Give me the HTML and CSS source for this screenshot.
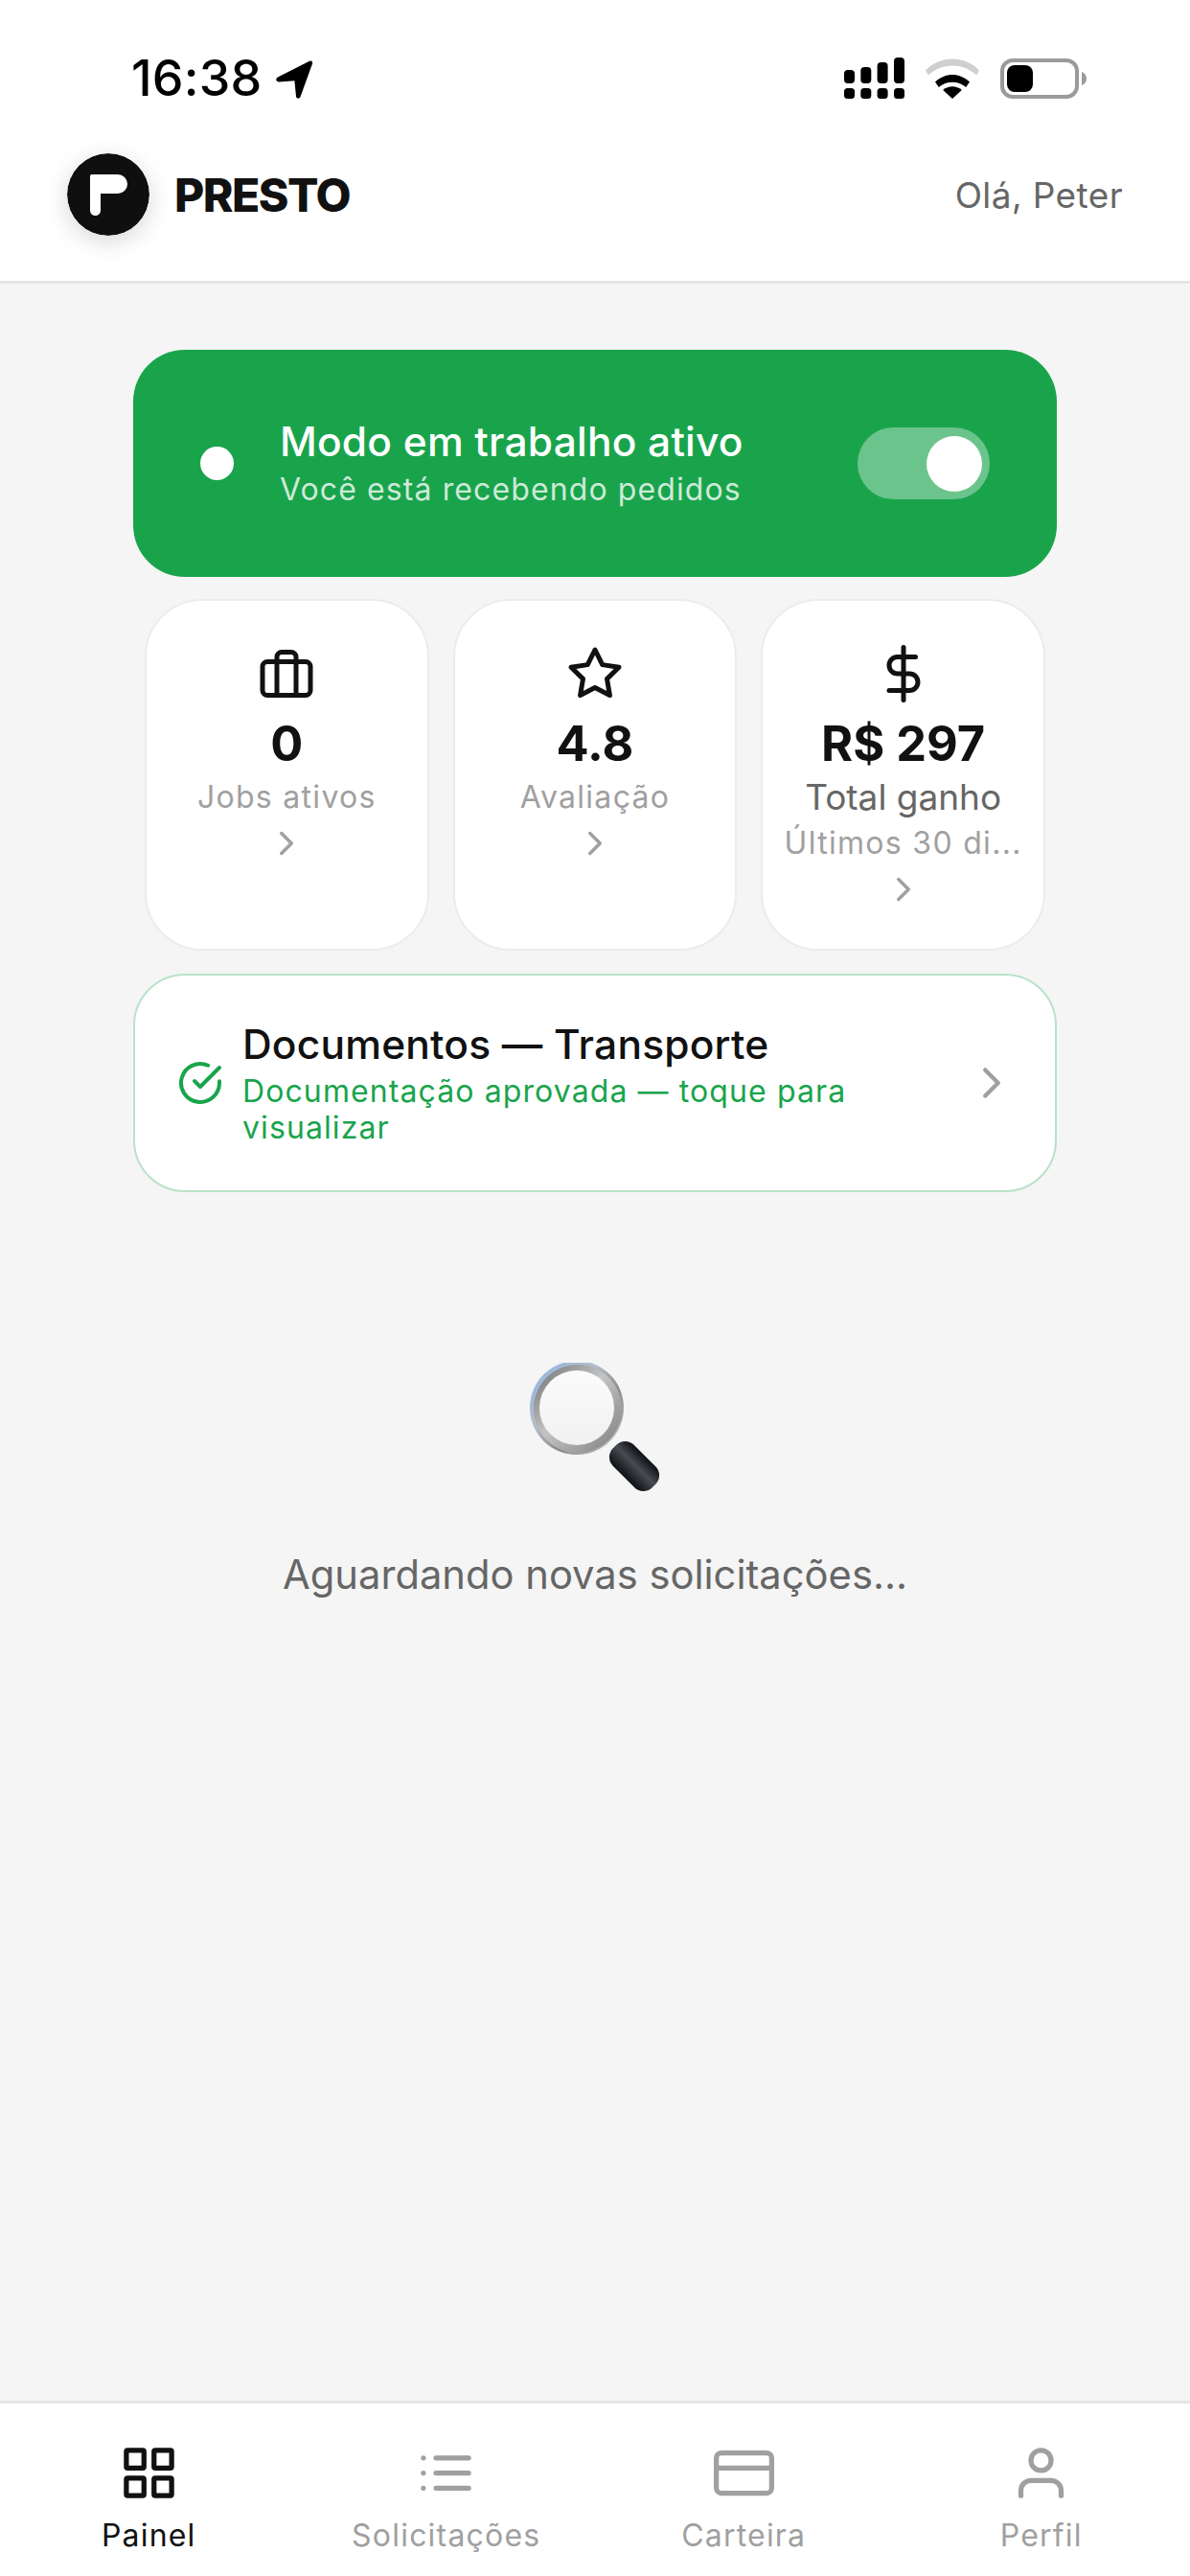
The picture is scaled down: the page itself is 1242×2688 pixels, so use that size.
FILE: index.html
```html
<!DOCTYPE html>
<html lang="pt-BR">
<head>
<meta charset="utf-8">
<title>Presto</title>
<link rel="stylesheet" href="styles.css">
</head>
<body>
<div class="app">
  <header class="top">
    <div class="status">
      <div class="status-left">
        <span class="time">16:38</span>
        <svg class="loc" viewBox="0 0 40 40"><path d="M3 17.500 36 .8c2-.9 3.700.7 3 2.800L26.500 38c-.9 2.400-4.200 2.200-4.500-.4l-1.600-16.300L4.300 22.500c-3.300-.3-4-3.600-1.300-5Z"/></svg>
      </div>
      <div class="status-right">
        <svg class="signal" viewBox="0 0 63 43"><rect x="0" y="13" width="11" height="14" rx="4"/><rect x="17.300" y="10" width="11" height="17" rx="4"/><rect x="34.600" y="5" width="11" height="22" rx="4"/><rect x="52" y="0" width="11" height="27" rx="4"/><rect x="0" y="32" width="11" height="11" rx="3.500"/><rect x="17.300" y="32" width="11" height="11" rx="3.500"/><rect x="34.600" y="32" width="11" height="11" rx="3.500"/><rect x="52" y="32" width="11" height="11" rx="3.500"/></svg>
        <svg class="wifi" viewBox="0 0 56 42"><path class="wifi-off" d="M0 12.500C15-3.500 41-3.500 56 12.500l-3 5C39.500 4 16.500 4 3 17.500Z"/><path d="M10 24.500c10.500-10 25.500-10 36 0l-3.800 5.500c-8-7-20.400-7-28.400 0Z"/><path d="M28 42 18.200 33c5.500-5 14-5 19.600 0Z"/></svg>
        <svg class="battery" viewBox="0 0 90 42"><rect class="bat-body" x="2" y="2" width="78" height="38" rx="11"/><rect x="7" y="7" width="27" height="28" rx="8"/><path class="bat-cap" d="M85 14c3 1 5 4 5 7s-2 6-5 7Z"/></svg>
      </div>
    </div>
    <div class="brandbar">
      <div class="brand">
        <svg class="logo" viewBox="0 0 86 86"><circle cx="43" cy="43" r="43" fill="#0f0f0f"/><path fill="#fff" d="M24 24a2 2 0 0 1 2-2h27a10 10 0 0 1 0 20H35v17.500a5.500 5.500 0 0 1-11 0Z"/></svg>
        <span class="brand-name">PRESTO</span>
      </div>
      <span class="greeting">Olá, Peter</span>
    </div>
  </header>

  <main class="content">
    <section class="work-card">
      <span class="work-dot"></span>
      <div class="work-text">
        <div class="work-title">Modo em trabalho ativo</div>
        <div class="work-sub">Você está recebendo pedidos</div>
      </div>
      <div class="toggle"><span class="knob"></span></div>
    </section>

    <section class="stats">
      <article class="stat">
        <svg class="stat-icon" viewBox="0 0 24 24"><rect x="2" y="7" width="20" height="14" rx="2"/><path d="M16 21V5a2 2 0 0 0-2-2h-4a2 2 0 0 0-2 2v16"/></svg>
        <div class="stat-value">0</div>
        <div class="stat-label">Jobs ativos</div>
        <svg class="chev" viewBox="0 0 24 24"><path d="m9 18 6-6-6-6"/></svg>
      </article>
      <article class="stat">
        <svg class="stat-icon" viewBox="0 0 24 24"><path d="m12 2 3.090 6.260L22 9.270l-5 4.870 1.180 6.880L12 17.770l-6.180 3.250L7 14.140 2 9.270l6.910-1.010L12 2Z"/></svg>
        <div class="stat-value">4.8</div>
        <div class="stat-label">Avaliação</div>
        <svg class="chev" viewBox="0 0 24 24"><path d="m9 18 6-6-6-6"/></svg>
      </article>
      <article class="stat">
        <svg class="stat-icon" viewBox="0 0 24 24"><path d="M12 1v22"/><path d="M17 5H9.500a3.500 3.500 0 0 0 0 7h5a3.500 3.500 0 0 1 0 7H6"/></svg>
        <div class="stat-value">R$ 297</div>
        <div class="stat-name">Total ganho</div>
        <div class="stat-label stat-clip">Últimos 30 di...</div>
        <svg class="chev" viewBox="0 0 24 24"><path d="m9 18 6-6-6-6"/></svg>
      </article>
    </section>

    <section class="doc-card">
      <svg class="doc-check" viewBox="0 0 24 24"><path d="M22 11.080V12a10 10 0 1 1-5.930-9.140"/><path d="M22 4 12 14.010l-3-3"/></svg>
      <div class="doc-text">
        <div class="doc-title">Documentos — Transporte</div>
        <div class="doc-sub">Documentação aprovada — toque para visualizar</div>
      </div>
      <svg class="doc-chev" viewBox="0 0 24 24"><path d="m9 18 6-6-6-6"/></svg>
    </section>

    <section class="empty">
      <svg class="lens" viewBox="0 0 140 140">
        <defs>
          <linearGradient id="ring" x1="0" y1="0" x2="1" y2="1">
            <stop offset="0" stop-color="#8db5ea"/>
            <stop offset=".38" stop-color="#b4bcc6"/>
            <stop offset=".62" stop-color="#8c8c8c"/>
            <stop offset="1" stop-color="#c9c9c9"/>
          </linearGradient>
          <linearGradient id="ring2" x1="0" y1="0" x2="1" y2="1">
            <stop offset="0" stop-color="#6e6e6e"/>
            <stop offset=".45" stop-color="#c4c4c4"/>
            <stop offset="1" stop-color="#7d7d7d"/>
          </linearGradient>
          <linearGradient id="glass" x1="0" y1="0" x2="0" y2="1">
            <stop offset="0" stop-color="#fbfbfb"/>
            <stop offset="1" stop-color="#f1f1f1"/>
          </linearGradient>
          <linearGradient id="grip" x1="0" y1="0" x2="1" y2="0">
            <stop offset="0" stop-color="#0e1013"/>
            <stop offset=".55" stop-color="#474c52"/>
            <stop offset="1" stop-color="#0e1013"/>
          </linearGradient>
          <filter id="soft"><feGaussianBlur stdDeviation=".6"/></filter>
        </defs>
        <g filter="url(#soft)">
          <rect x="-15.500" y="-29" width="31" height="58" rx="13" fill="url(#grip)" transform="translate(109 108) rotate(-45)"/>
          <circle cx="49" cy="47" r="49" fill="url(#ring)"/>
          <circle cx="50" cy="48" r="46" fill="url(#ring2)"/>
          <circle cx="49" cy="47" r="39" fill="url(#glass)"/>
        </g>
      </svg>
      <p class="empty-text">Aguardando novas solicitações...</p>
    </section>
  </main>

  <nav class="tabs">
    <div class="tab tab-active">
      <svg class="tab-icon" viewBox="0 0 24 24"><rect x="3" y="3" width="7" height="7" rx=".5"/><rect x="14" y="3" width="7" height="7" rx=".5"/><rect x="3" y="14" width="7" height="7" rx=".5"/><rect x="14" y="14" width="7" height="7" rx=".5"/></svg>
      <span>Painel</span>
    </div>
    <div class="tab">
      <svg class="tab-icon" viewBox="0 0 24 24"><path d="M8 6h13M8 12h13M8 18h13M3 6h.010M3 12h.010M3 18h.010"/></svg>
      <span>Solicitações</span>
    </div>
    <div class="tab">
      <svg class="tab-icon" viewBox="0 0 24 24"><rect x="1" y="4" width="22" height="16" rx="2"/><path d="M1 10h22"/></svg>
      <span>Carteira</span>
    </div>
    <div class="tab">
      <svg class="tab-icon" viewBox="0 0 24 24"><path d="M20 21v-2a4 4 0 0 0-4-4H8a4 4 0 0 0-4 4v2"/><circle cx="12" cy="7" r="4"/></svg>
      <span>Perfil</span>
    </div>
  </nav>
</div>
</body>
</html>
```

FILE: styles.css
```css
* { box-sizing: border-box; }

html, body {
  margin: 0;
  padding: 0;
}

body {
  font-family: Inter, "Liberation Sans", sans-serif;
  background: #f5f5f5;
  color: #111;
}

.app {
  width: 1242px;
  height: 2688px;
  display: flex;
  flex-direction: column;
  overflow: hidden;
}

/* Top area */
.top {
  background: #fff;
  border-bottom: 3px solid #e5e5e5;
  height: 296px;
  flex: none;
}

.status {
  height: 160px;
  padding: 60px 108px 0 137px;
  display: flex;
  justify-content: space-between;
  align-items: flex-start;
}

.status-left {
  display: flex;
  align-items: flex-start;
  gap: 14px;
}

.time {
  font-size: 52px;
  line-height: 44px;
  font-weight: 500;
  color: #000;
  letter-spacing: .2px;
}

.loc {
  width: 40px;
  height: 40px;
  margin-top: 3px;
  fill: #000;
}

.status-right {
  display: flex;
  align-items: flex-start;
  gap: 22px;
}

.signal {
  width: 63px;
  height: 43px;
  fill: #000;
}

.wifi {
  width: 56px;
  height: 42px;
  margin-top: 1px;
  fill: #000;
}

.wifi-off { fill: #cfcfcf; }

.battery {
  width: 90px;
  height: 42px;
  margin-top: 1px;
}

.bat-body {
  fill: none;
  stroke: #9a9a9a;
  stroke-width: 4;
}

.bat-cap { fill: #9a9a9a; }

.brandbar {
  display: flex;
  justify-content: space-between;
  align-items: center;
  padding: 0 70px;
  height: 86px;
}

.brand {
  display: flex;
  align-items: center;
  gap: 26px;
}

.logo {
  width: 86px;
  height: 86px;
  border-radius: 50%;
  box-shadow: 0 6px 24px rgba(0, 0, 0, .16);
}

.brand-name {
  font-size: 48px;
  font-weight: 800;
  letter-spacing: -1.500px;
  color: #111;
}

.greeting {
  font-size: 37px;
  color: #666;
  letter-spacing: .4px;
}

/* Content */
.content {
  flex: 1;
  min-height: 0;
  padding: 69px 139px 0;
  background: #f5f5f5;
  display: flex;
  flex-direction: column;
}

.work-card {
  height: 237px;
  background: #19a44c;
  border-radius: 54px;
  padding: 0 70px;
  display: flex;
  align-items: center;
}

.work-dot {
  width: 35px;
  height: 35px;
  border-radius: 50%;
  background: #fff;
  flex: none;
  margin-right: 48px;
}

.work-text {
  flex: 1;
  color: #fff;
}

.work-title {
  font-size: 42.500px;
  line-height: 50px;
  font-weight: 550;
  letter-spacing: .2px;
}

.work-sub {
  font-size: 32px;
  line-height: 40px;
  letter-spacing: 1.100px;
  color: rgba(255, 255, 255, .78);
  margin-top: 5px;
}

.toggle {
  width: 138px;
  height: 75px;
  border-radius: 38px;
  background: #6bc48c;
  position: relative;
  flex: none;
}

.knob {
  position: absolute;
  right: 8px;
  top: 9px;
  width: 58px;
  height: 58px;
  border-radius: 50%;
  background: #fff;
}

.stats {
  display: grid;
  grid-template-columns: repeat(3, 1fr);
  gap: 25px;
  margin: 23px 12px 0;
}

.stat {
  height: 367px;
  background: #fff;
  border: 2px solid #ececec;
  border-radius: 60px;
  padding: 46px 18px 0;
  display: flex;
  flex-direction: column;
  align-items: center;
  min-width: 0;
}

.stat-icon {
  width: 60px;
  height: 60px;
  fill: none;
  stroke: #111;
  stroke-width: 2;
  stroke-linecap: round;
  stroke-linejoin: round;
  flex: none;
}

.stat-value {
  font-size: 50.500px;
  line-height: 58px;
  font-weight: 650;
  margin-top: 14px;
  color: #111;
}

.stat-label {
  font-size: 32px;
  line-height: 48px;
  letter-spacing: 1.300px;
  color: #a0a0a0;
  margin-top: 3px;
}

.stat-name {
  font-size: 37px;
  line-height: 48px;
  color: #666;
  margin-top: 3px;
}

.stat-clip {
  margin-top: 0;
  white-space: nowrap;
}

.chev {
  width: 42px;
  height: 42px;
  margin-top: 3px;
  fill: none;
  stroke: #a0a0a0;
  stroke-width: 2;
  stroke-linecap: round;
  stroke-linejoin: round;
  flex: none;
}

.doc-card {
  height: 228px;
  margin-top: 24px;
  background: #fff;
  border: 2px solid #b9e2c8;
  border-radius: 54px;
  padding: 0 39px 0 44px;
  display: flex;
  align-items: center;
}

.doc-check {
  width: 48px;
  height: 48px;
  flex: none;
  fill: none;
  stroke: #19a44c;
  stroke-width: 2;
  stroke-linecap: round;
  stroke-linejoin: round;
  margin-right: 20px;
}

.doc-text {
  flex: 1;
  min-width: 0;
  padding-right: 20px;
}

.doc-title {
  font-size: 42.500px;
  line-height: 50px;
  font-weight: 550;
  letter-spacing: .2px;
  color: #111;
}

.doc-sub {
  font-size: 32px;
  line-height: 38px;
  letter-spacing: 1.100px;
  color: #19a44c;
  margin-top: 5px;
}

.doc-chev {
  width: 54px;
  height: 54px;
  flex: none;
  fill: none;
  stroke: #a0a0a0;
  stroke-width: 2;
  stroke-linecap: round;
  stroke-linejoin: round;
}

.empty {
  margin-top: 178px;
  display: flex;
  flex-direction: column;
  align-items: center;
}

.lens {
  width: 140px;
  height: 140px;
  margin-left: 4px;
}

.empty-text {
  margin: 56px 0 0;
  font-size: 41.700px;
  line-height: 50px;
  color: #666;
}

/* Tabs */
.tabs {
  flex: none;
  height: 183px;
  background: #fff;
  border-top: 3px solid #e5e5e5;
  display: grid;
  grid-template-columns: repeat(4, 1fr);
  padding-top: 41px;
}

.tab {
  display: flex;
  flex-direction: column;
  align-items: center;
  font-size: 32px;
  line-height: 40px;
  letter-spacing: 1.200px;
  color: #a0a0a0;
}

.tab-active {
  color: #111;
}

.tab-icon {
  width: 63px;
  height: 63px;
  margin-bottom: 14px;
  fill: none;
  stroke: currentColor;
  stroke-width: 2;
  stroke-linecap: round;
  stroke-linejoin: round;
}
```
